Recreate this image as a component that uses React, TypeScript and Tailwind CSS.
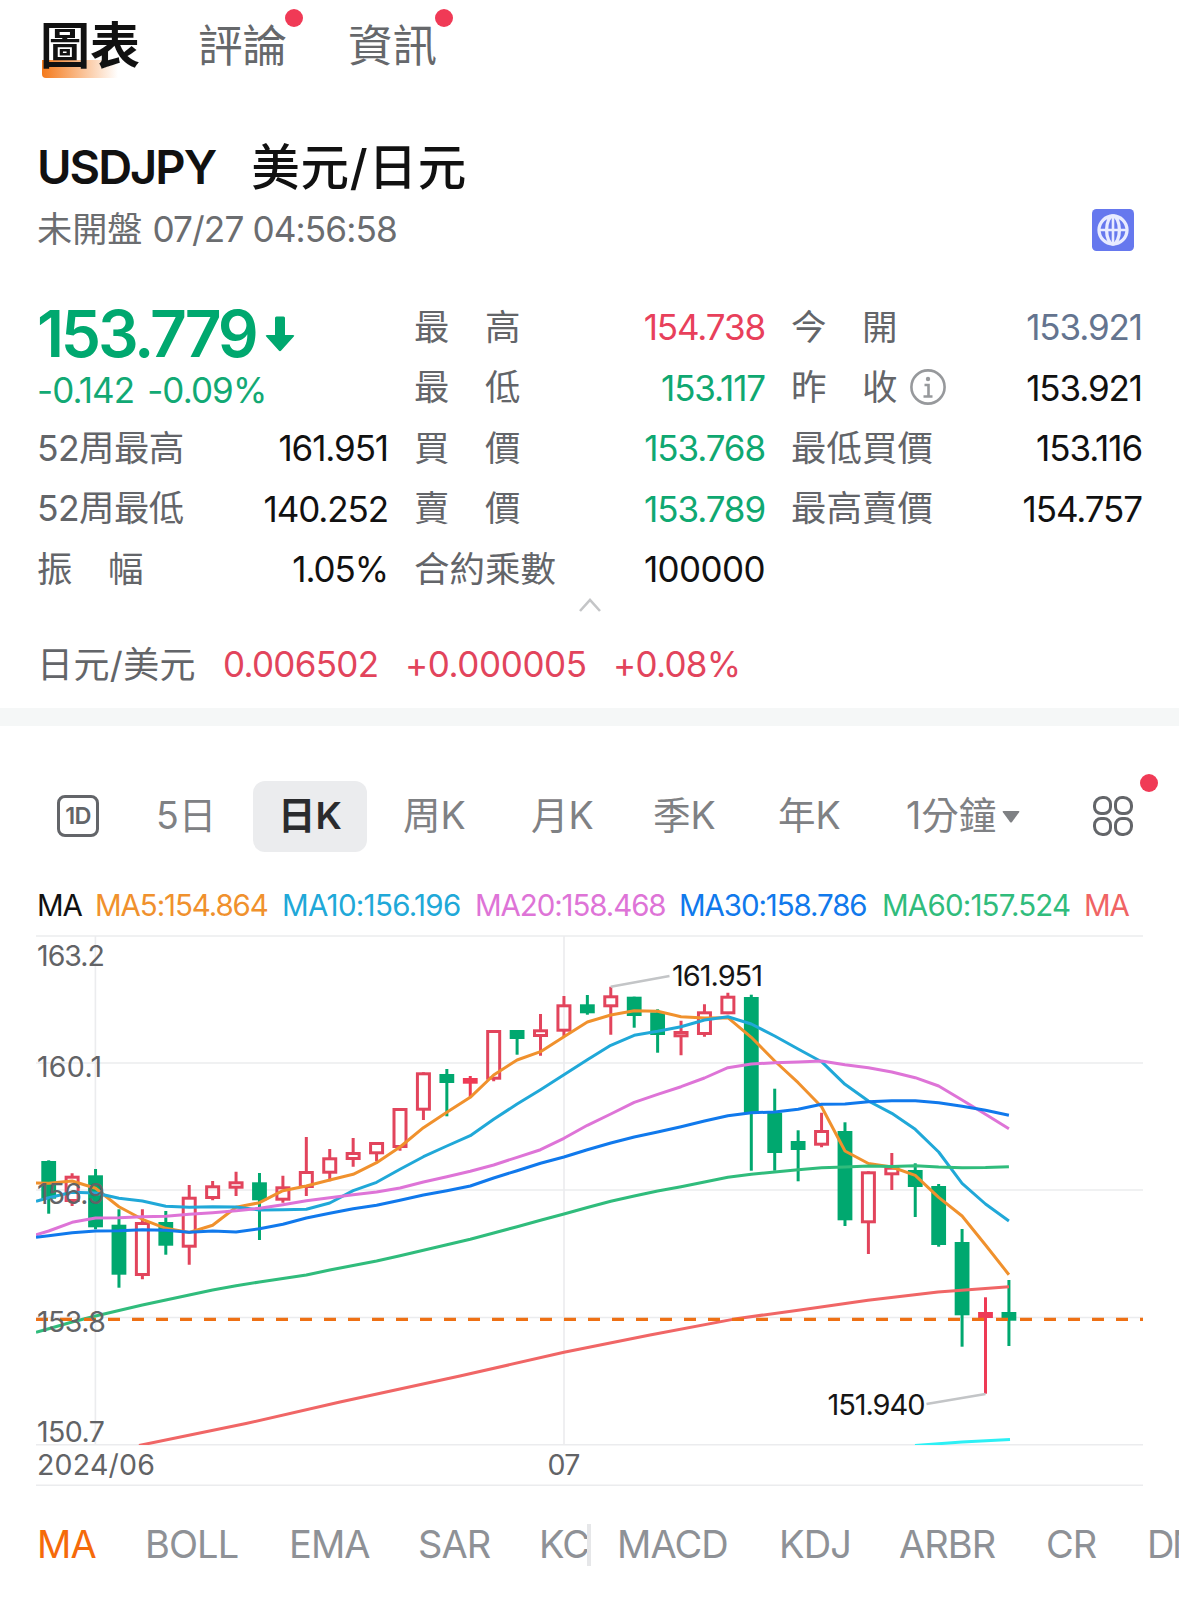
import { clsx } from "clsx";

type Candle = [high: number, top: number, bottom: number, low: number, kind: "up" | "down" | "flat"];

const UP = "#e2445c";
const DOWN = "#00a86f";

const FIRST_X = 48.7;
const STEP = 23.42;
const candleX = (i: number) => FIRST_X + i * STEP;

const candles: Candle[] = [
  [1160.3, 1161, 1198.7, 1213.7, "down"],
  [1173.3, 1175.7, 1202, 1206, "up"],
  [1169, 1175.3, 1227.3, 1229.3, "down"],
  [1209.3, 1224.7, 1274.7, 1287.7, "down"],
  [1209.3, 1222, 1276, 1279.3, "up"],
  [1211, 1222, 1245.7, 1254.7, "down"],
  [1185, 1196.7, 1247.7, 1264.7, "up"],
  [1181, 1185.3, 1199, 1200.3, "up"],
  [1171.7, 1181.3, 1188.7, 1196, "up"],
  [1173, 1182.3, 1200.3, 1240, "down"],
  [1175.7, 1186.3, 1200.7, 1202.7, "up"],
  [1137, 1171, 1188, 1196, "up"],
  [1149, 1157.3, 1173.7, 1181.3, "up"],
  [1138, 1152, 1160, 1166.7, "up"],
  [1142, 1142, 1154.3, 1161.3, "up"],
  [1108, 1108, 1148, 1150.7, "up"],
  [1072.3, 1072.3, 1110.7, 1120, "up"],
  [1069, 1074, 1083, 1116.3, "down"],
  [1076, 1078, 1083.7, 1097.3, "flat"],
  [1030, 1030, 1079.7, 1081.3, "up"],
  [1030, 1030, 1039, 1054.7, "down"],
  [1014, 1029.3, 1037, 1055.7, "up"],
  [996, 1004.3, 1031.7, 1036, "up"],
  [995, 1004.3, 1013.3, 1014.7, "down"],
  [986.7, 995.3, 1007.3, 1034.7, "up"],
  [996.7, 996.7, 1016, 1027.7, "down"],
  [1009.3, 1012.3, 1035, 1052.7, "down"],
  [1020.7, 1031, 1037.3, 1055.3, "up"],
  [1004.3, 1011.3, 1035, 1036.7, "up"],
  [992.7, 995.7, 1014.3, 1014.3, "up"],
  [994.7, 997, 1113.3, 1170.7, "down"],
  [1088.7, 1112.7, 1153, 1170.7, "down"],
  [1130.3, 1141, 1150, 1181.3, "down"],
  [1112.7, 1130, 1145.7, 1147.3, "up"],
  [1122.3, 1131, 1220.3, 1226, "down"],
  [1171.3, 1171.3, 1223.3, 1254, "up"],
  [1153, 1166.7, 1175.3, 1190, "up"],
  [1163.3, 1170, 1187, 1217, "down"],
  [1184, 1186, 1245, 1246.7, "down"],
  [1229, 1242, 1315.3, 1346.7, "down"],
  [1297.3, 1312, 1318, 1393.7, "flat"],
  [1280, 1312, 1320.7, 1346, "down"],
];

// One value per candle, the first one sits on the left edge of the plot.
const averages = [
  {
    color: "#f0912d",
    ys: [1183, 1183.3, 1181, 1188.3, 1206.7, 1219.3, 1228.3, 1232.5, 1225.3, 1207.3, 1202.7, 1190.7, 1186, 1180, 1174.3, 1162.7, 1147, 1127.7, 1112.3, 1097.3, 1075, 1060, 1051.7, 1036.7, 1022, 1015, 1010.7, 1011.3, 1016.7, 1018, 1017.7, 1037.3, 1061, 1082.7, 1106.7, 1151, 1163.5, 1167, 1175.3, 1197.3, 1216, 1245, 1274.7],
  },
  {
    color: "#20a8d8",
    ys: [1201.3, 1197.7, 1192.3, 1193, 1198.3, 1201, 1206.3, 1207.3, 1206.7, 1207, 1210, 1209.7, 1209.3, 1203, 1190.7, 1182.3, 1169.3, 1156.7, 1146, 1135.7, 1119.3, 1104, 1089.7, 1074.7, 1059.7, 1045.3, 1035.3, 1031.3, 1026.7, 1020, 1016.7, 1024, 1036, 1049, 1061.7, 1084.3, 1101, 1113.3, 1129.3, 1152, 1183.3, 1204, 1221],
  },
  {
    color: "#de74d7",
    ys: [1234.7, 1231, 1222.3, 1218, 1217.7, 1216.7, 1216.3, 1214.3, 1212.7, 1210.7, 1208.3, 1204.7, 1200.7, 1197.7, 1194.7, 1192, 1188, 1182, 1176.7, 1171.3, 1165, 1157.3, 1149.7, 1138.3, 1125.3, 1114, 1102.3, 1094.3, 1086.7, 1078, 1067.7, 1064, 1062.7, 1062, 1061, 1064.7, 1067.7, 1072, 1077.7, 1086, 1100, 1114.3, 1128.7],
  },
  {
    color: "#1079ec",
    ys: [1237.3, 1235.7, 1232.7, 1231, 1230.7, 1229.7, 1230.3, 1232.3, 1231, 1232, 1228.7, 1224.3, 1218, 1213.3, 1208.7, 1205.3, 1200.3, 1195, 1190.7, 1186, 1178, 1170.7, 1163.3, 1157, 1149.7, 1143, 1137, 1132, 1126.7, 1121, 1115.7, 1112.7, 1112, 1109.3, 1104.3, 1104, 1101.7, 1100.7, 1100.7, 1102.7, 1106.3, 1110.3, 1115.3],
  },
  {
    color: "#30bc7c",
    ys: [1332.3, 1328.7, 1322, 1316, 1310.5, 1305, 1300, 1295, 1290, 1285.7, 1282, 1278.5, 1275, 1270, 1265.5, 1261, 1255.7, 1250.3, 1244.8, 1239.3, 1233, 1226.7, 1220.3, 1214, 1207.5, 1201.3, 1196, 1191, 1186.7, 1182, 1177.3, 1174.3, 1172, 1169.7, 1167.7, 1167, 1166, 1166.5, 1165.7, 1167, 1167.7, 1167.5, 1166.7],
  },
];

const stats = [
  [
    { label: "52周最高", value: "161.951", color: "text-[#111]" },
    { label: "52周最低", value: "140.252", color: "text-[#111]" },
    { label: "振\u3000幅", value: "1.05%", color: "text-[#111]" },
  ],
  [
    { label: "最\u3000高", value: "154.738", color: "text-[#e8405b]" },
    { label: "最\u3000低", value: "153.117", color: "text-[#0fa871]" },
    { label: "買\u3000價", value: "153.768", color: "text-[#0fa871]" },
    { label: "賣\u3000價", value: "153.789", color: "text-[#0fa871]" },
    { label: "合約乘數", value: "100000", color: "text-[#111]" },
  ],
  [
    { label: "今\u3000開", value: "153.921", color: "text-[#64748f]" },
    { label: "昨\u3000收", value: "153.921", color: "text-[#111]", info: true },
    { label: "最低買價", value: "153.116", color: "text-[#111]" },
    { label: "最高賣價", value: "154.757", color: "text-[#111]" },
  ],
];

const periods = [
  { label: "周K", className: "w-[128px]" },
  { label: "月K", className: "w-[122px]" },
  { label: "季K", className: "w-[125px]" },
  { label: "年K", className: "w-[128px]" },
];

const legend = [
  { label: "MA", className: "w-[58px] text-[#111]" },
  { label: "MA5:154.864", className: "w-[187px] text-[#f0912d]" },
  { label: "MA10:156.196", className: "w-[193px] tracking-[-0.7px] text-[#20a8d8]" },
  { label: "MA20:158.468", className: "w-[204px] text-[#de74d7]" },
  { label: "MA30:158.786", className: "w-[203px] text-[#1079ec]" },
  { label: "MA60:157.524", className: "w-[202px] tracking-[-0.8px] text-[#30bc7c]" },
  { label: "MA", className: "w-[44px] text-[#f06464]" },
];

const mainIndicators = [
  { label: "MA", className: "w-[108px] text-[#f56a0a]" },
  { label: "BOLL", className: "w-[144px]" },
  { label: "EMA", className: "w-[129px]" },
  { label: "SAR", className: "w-[121px]" },
  { label: "KC", className: "w-[48px] overflow-hidden" },
];

const subIndicators = [
  { label: "MACD", className: "w-[162px]" },
  { label: "KDJ", className: "w-[120px]" },
  { label: "ARBR", className: "w-[147px]" },
  { label: "CR", className: "w-[101px]" },
  { label: "DMI", className: "w-[90px] tracking-[-2.5px]" },
];

function Dot({ className }: { className: string }) {
  return <span className={clsx("absolute size-[18px] rounded-full bg-[#f03a56]", className)} />;
}

function Stat({ label, value, color, info }: { label: string; value: string; color: string; info?: boolean }) {
  return (
    <div className="flex h-[60.5px] items-center justify-between whitespace-nowrap">
      <div
        className={clsx(
          "flex items-center gap-3 text-[35.5px] text-[#636569]",
          label.startsWith("52") && "tracking-[-0.6px]",
        )}
      >
        {label}
        {info ? <InfoIcon /> : null}
      </div>
      <div
        className={clsx("pr-px text-[35px]", value.includes(".") ? "tracking-[-1.1px]" : "tracking-[-0.6px]", color)}
      >
        {value}
      </div>
    </div>
  );
}

function InfoIcon() {
  return (
    <svg viewBox="0 0 36 36" className="-mt-px size-9" fill="none" stroke="#97999c" strokeWidth="2.6">
      <circle cx="18" cy="18" r="16.6" />
      <circle cx="18" cy="10" r="2.2" fill="#97999c" stroke="none" />
      <path d="M14.5 16h4v11.5M13.5 27.5h9" />
    </svg>
  );
}

function GlobeIcon() {
  return (
    <svg viewBox="0 0 42 42" className="mt-0.5 size-[42px]" fill="none" stroke="#e8ebff" strokeWidth="3.3">
      <rect width="42" height="42" rx="4.5" fill="#6678ee" stroke="none" />
      <circle cx="21" cy="21" r="14" />
      <ellipse cx="21" cy="21" rx="6.4" ry="14" />
      <path d="M21 7v28M7 21h28" strokeWidth="2.6" />
    </svg>
  );
}

function CandleChart() {
  return (
    <svg
      viewBox="36 930 1107 558"
      className="block h-[558px] w-[1107px] font-[Inter,sans-serif]"
      fill="none"
    >
      <defs>
        <clipPath id="plot">
          <rect x="36" y="936" width="1107" height="509" />
        </clipPath>
      </defs>

      <g stroke="#ebecee" strokeWidth="1.6">
        {[936, 1063, 1190, 1317.5, 1444.7, 1485.3].map((y) => (
          <path key={y} d={`M36 ${y}H1143`} />
        ))}
        <path d="M95.4 936V1444M564 936V1444" />
      </g>

      {candles.map(([high, top, bottom, low, kind], i) => {
        const x = candleX(i);
        if (kind === "up") {
          return (
            <g key={i} stroke={UP} strokeWidth="3">
              <path d={`M${x} ${high}V${top + 1}M${x} ${bottom - 1}V${low}`} />
              <rect x={x - 6} y={top + 1.5} width="12" height={bottom - top - 3} />
            </g>
          );
        }
        const color = kind === "down" ? DOWN : "#ee3a55";
        return (
          <g key={i} fill={color}>
            <rect x={x - 1.5} y={high} width="3" height={low - high} />
            <rect x={x - 7.4} y={top} width="14.8" height={bottom - top} />
          </g>
        );
      })}

      <g clipPath="url(#plot)" strokeWidth="3" strokeLinejoin="round">
        {averages.map(({ color, ys }) => (
          <polyline
            key={color}
            stroke={color}
            points={ys.map((y, i) => `${i === 0 ? 36 : candleX(i - 1)},${y}`).join(" ")}
          />
        ))}
        <path
          stroke="#f06666"
          d="M139 1445.5L246 1423.5L340 1402L461 1375.8L564 1352.3L650 1335L738 1318.4L800 1310L868 1300.3L938 1292L1009 1286.7"
        />
        <path stroke="#2df0f5" d="M915 1445.5L962 1442L1010 1439.4" />
      </g>

      <path d="M36 1319.3H1143" stroke="#ee7014" strokeWidth="3.2" strokeDasharray="12 12" />
      <path d="M610.7 986.7L669.5 976M926.5 1404L985.5 1394" stroke="#c3c5c7" strokeWidth="2.6" />

      <g fill="#626366" fontSize="28.5">
        <text x="37" y="966" textLength="68">163.2</text>
        <text x="37" y="1077" textLength="65">160.1</text>
        <text x="37" y="1204.3" textLength="68">156.9</text>
        <text x="37" y="1331.5" textLength="69">153.8</text>
        <text x="37" y="1442" textLength="68">150.7</text>
        <text x="37" y="1474.8" textLength="118">2024/06</text>
        <text x="547.5" y="1474.8" textLength="33">07</text>
      </g>
      <g fill="#151515" fontSize="29">
        <text x="672" y="986.3" textLength="91">161.951</text>
        <text x="827.5" y="1414.5" textLength="98">151.940</text>
      </g>
    </svg>
  );
}

export default function App() {
  return (
    <div className="h-[1608px] w-[1179px] overflow-hidden bg-white font-[Inter,'Noto_Sans_CJK_TC',sans-serif] text-[#111]">
      <nav className="flex h-[92px] items-center whitespace-nowrap pl-[40px] text-[44.5px] leading-none text-[#66686b]">
        <div className="relative mr-[58px] text-[50px] font-bold text-[#111]">
          <span className="absolute left-0.5 top-[39px] h-[18px] w-[76px] rounded-bl bg-linear-to-r from-[#f47a1c] to-transparent" />
          <span className="relative">圖表</span>
        </div>
        <div className="relative mr-[61px]">
          評論
          <Dot className="-top-[15px] left-[87px]" />
        </div>
        <div className="relative">
          資訊
          <Dot className="-top-[15px] left-[87px]" />
        </div>
      </nav>

      <header className="px-[37px] pt-[44px]">
        <div className="flex h-[62px] items-center gap-[36px] whitespace-nowrap text-[47px]">
          <span className="font-semibold tracking-[-2px]">USDJPY</span>
          <span className="pt-0.5 text-[48.5px] font-medium tracking-[0.8px]">美元/日元</span>
        </div>
        <div className="flex h-[62px] items-center justify-between whitespace-nowrap pr-2 text-[35.2px] text-[#6b6d70]">
          <span>
            未開盤 <span className="tracking-[-0.9px]">07/27 04:56:58</span>
          </span>
          <GlobeIcon />
        </div>
      </header>

      <section className="grid grid-cols-[352px_352px_352px] gap-[25px] pl-[37px] pt-[37px]">
        <div>
          <div className="flex h-[70px] items-center gap-[9px] pt-1 text-[64px] font-semibold leading-none tracking-[-3.2px] text-[#00a86f]">
            153.779
            <svg viewBox="0 0 30 36" className="h-9 w-[30px]" fill="#00a86f">
              <path d="M10 2q0-1.500 1.500-1.500h7q1.500 0 1.500 1.500v17h8q2 0 .8 1.600L16.200 34.500q-1.200 1.400-2.400 0L1.200 20.600Q0 19 2 19h8z" />
            </svg>
          </div>
          <div className="mb-[5px] flex h-[46px] items-center gap-[13px] whitespace-nowrap text-[35px] tracking-[-0.9px] text-[#12a974]">
            <span>-0.142</span>
            <span>-0.09%</span>
          </div>
          {stats[0].map((s) => (
            <Stat key={s.label} {...s} />
          ))}
        </div>
        {stats.slice(1).map((column, i) => (
          <div key={i}>
            {column.map((s) => (
              <Stat key={s.label} {...s} />
            ))}
          </div>
        ))}
      </section>

      <div className="flex h-[22px] justify-center">
        <svg viewBox="0 0 22 14" className="-mt-0.5 h-3.5 w-[22px]" fill="none" stroke="#c4c5c7" strokeWidth="2.6">
          <path d="M1 13L11 2L21 13" />
        </svg>
      </div>

      <div className="flex h-[86px] items-center whitespace-nowrap pl-[37px] text-[35px] tracking-[-0.7px] text-[#e2445c]">
        <span className="w-[186px] text-[36px] tracking-[0.4px] text-[#636569]">日元/美元</span>
        <span className="w-[182px]">0.006502</span>
        <span className="w-[208px] tracking-[-0.4px]">+0.000005</span>
        <span>+0.08%</span>
      </div>

      <div className="h-[18px] bg-[#f5f7f7]" />

      <div className="flex h-[154px] items-center whitespace-nowrap pl-[57px] pt-[28px] text-[37.5px] text-[#7f8184]">
        <div className="-mt-0.5 mr-[57px] flex size-[42px] items-center justify-center rounded-lg border-[3px] border-[#636569] text-[23.5px] font-semibold tracking-[-0.6px] text-[#636569]">
          1D
        </div>
        <span className="w-[97px]">5日</span>
        <div className="mr-[36px] flex h-[71px] w-[114px] items-center justify-center rounded-xl bg-[#ebecee] font-semibold text-[#2a2b2d]">
          日K
        </div>
        {periods.map(({ label, className }) => (
          <span key={label} className={className}>
            {label}
          </span>
        ))}
        <span>1分鐘</span>
        <svg viewBox="0 0 18 12" className="ml-1.5 h-3 w-[18px]" fill="#7f8184">
          <path d="M1.500 0h15q1.500 0 .6 1.300L10 11q-1 1-2 0L.9 1.300Q0 0 1.500 0z" />
        </svg>
        <div className="relative -mt-0.5 ml-[73px]">
          <svg viewBox="0 0 40 40" className="size-10" fill="none" stroke="#636569" strokeWidth="3">
            <path d="M9.500 1.500H11a6.500 6.500 0 0 1 6.500 6.500v3A6.500 6.500 0 0 1 11 17.500H8A6.500 6.500 0 0 1 1.500 11V9.500a8 8 0 0 1 8-8z" />
            <path d="M30.500 1.500H29A6.500 6.500 0 0 0 22.500 8v3a6.500 6.500 0 0 0 6.500 6.500h3a6.500 6.500 0 0 0 6.500-6.500V9.500a8 8 0 0 0-8-8z" />
            <path d="M9.500 38.500H11a6.500 6.500 0 0 0 6.500-6.500v-3a6.500 6.500 0 0 0-6.500-6.500H8A6.500 6.500 0 0 0 1.500 29v1.500a8 8 0 0 0 8 8z" />
            <path d="M30.500 38.500H29a6.500 6.500 0 0 1-6.500-6.500v-3a6.500 6.500 0 0 1 6.500-6.500h3a6.500 6.500 0 0 1 6.500 6.500v1.500a8 8 0 0 1-8 8z" />
          </svg>
          <Dot className="-top-[22px] left-[47px]" />
        </div>
      </div>

      <div className="flex h-[50px] items-center whitespace-nowrap pl-[37px] pt-0.5 text-[29.5px] leading-none tracking-[-1.1px]">
        {legend.map(({ label, className }, i) => (
          <span key={i} className={clsx("shrink-0", className)}>
            {label}
          </span>
        ))}
      </div>

      <div className="px-9">
        <CandleChart />
      </div>

      <div className="flex h-[114px] items-center overflow-hidden whitespace-nowrap pl-[37px] text-[38px] tracking-[-0.9px] text-[#8e9196]">
        {mainIndicators.map(({ label, className }) => (
          <span key={label} className={clsx("shrink-0", className)}>
            {label}
          </span>
        ))}
        <span className="mr-[26px] h-[42px] w-1 shrink-0 bg-[#e6e7e9]" />
        {subIndicators.map(({ label, className }) => (
          <span key={label} className={clsx("shrink-0", className)}>
            {label}
          </span>
        ))}
      </div>
    </div>
  );
}
